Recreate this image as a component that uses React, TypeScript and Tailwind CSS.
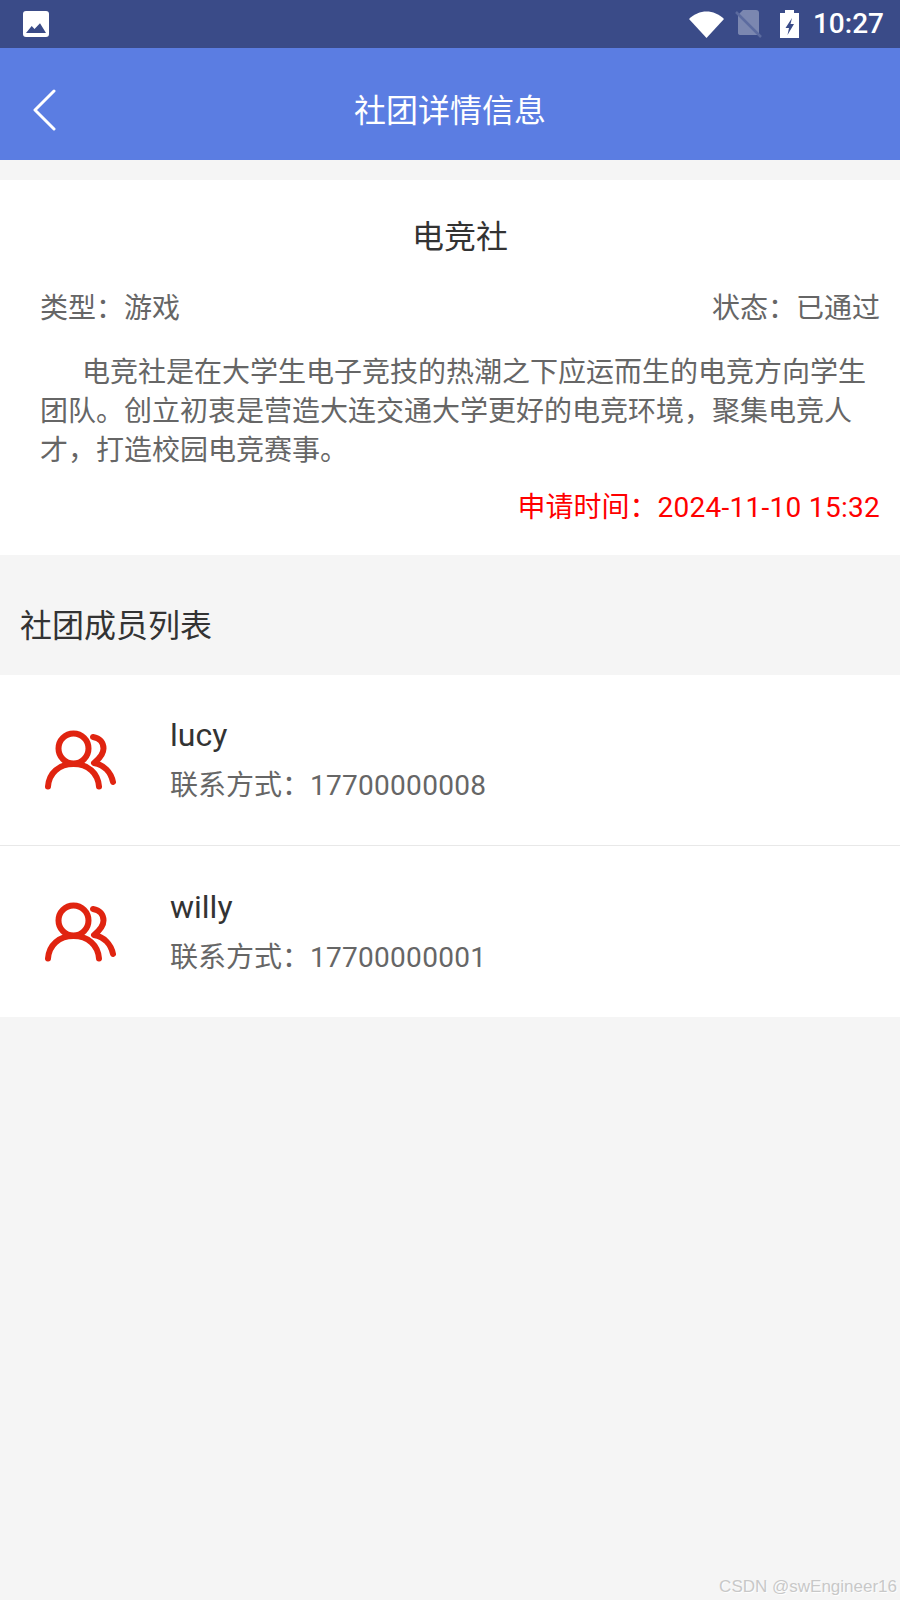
import React from 'react';

const members = [
  { name: 'lucy', phone: '17700000008' },
  { name: 'willy', phone: '17700000001' },
];

const GroupIcon: React.FC = () => (
  <svg width="72" height="62" viewBox="0 0 72 62" fill="none" stroke="#e02410" strokeWidth="6" strokeLinecap="round" strokeLinejoin="round">
    <circle cx="29.500" cy="19.500" r="15" />
    <path d="M4 57.500 C5 44 15 35 29.500 35 C44 35 54 44 55 57.500" />
    <path d="M49 8 C56 9 59.500 14 59.500 19.500 C59.500 25 55 30 50 34 C60 36 67 43 69 53" />
  </svg>
);

const StatusBar: React.FC = () => (
  <div className="h-12 bg-[#3a4b88] flex items-center justify-between pl-[23px] pr-4 text-white">
    <svg width="26" height="26" viewBox="0 0 26 26">
      <rect width="26" height="26" rx="3" fill="#fff" />
      <path d="M3 22 L8.700 15 L11.500 18 L17 12.300 L23 22 Z" fill="#3a4b88" />
    </svg>
    <div className="flex items-center">
      <svg width="35" height="27" viewBox="0 0 35 27" className="mr-[11px]">
        <path d="M0 8 C10 -2 25 -2 35 8 L17.500 27 Z" fill="#fff" />
      </svg>
      <svg width="27" height="28" viewBox="0 0 27 28" className="mr-[18px]">
        <path d="M8 0 H21 Q24 0 24 3 V23 Q24 25 21 25 H6 Q3 25 3 23 V5 Z" fill="#7b87b0" />
        <path d="M1 2 L26 27" stroke="#5c6b9f" strokeWidth="2.500" />
      </svg>
      <svg width="19" height="28" viewBox="0 0 19 28" className="mr-[14px]">
        <path d="M5 0 H14 V3 H19 V28 H0 V3 H5 Z" fill="#fff" />
        <path d="M12 8 L5.500 18 H9 L7.500 25 L14 14 H10.500 Z" fill="#3a4b88" />
      </svg>
      <span className="text-[28px] leading-none font-medium">10:27</span>
    </div>
  </div>
);

export default function App() {
  return (
    <div
      className="relative w-[900px] h-[1600px] bg-[#f5f5f5] flex flex-col overflow-hidden"
      style={{ fontFamily: 'Roboto, "Noto Sans CJK SC", sans-serif' }}
    >
      <StatusBar />
      <div className="h-28 bg-[#5b7de2] relative flex items-center justify-center pt-[14px]">
        <svg width="24" height="42" viewBox="0 0 24 42" fill="none" stroke="#fff" strokeWidth="3" strokeLinecap="round" strokeLinejoin="round" className="absolute left-[33px] top-[41px]">
          <path d="M21 2 L2 21 L21 40" />
        </svg>
        <span className="text-[32px] text-white">社团详情信息</span>
      </div>

      <div className="mt-5 h-[375px] bg-white pl-10 pr-5 pt-[33px] text-[#666] text-[28px]">
        <div className="text-center text-[32px] leading-[48px] text-[#333]">电竞社</div>
        <div className="mt-[28px] flex justify-between leading-[40px]">
          <span>类型：游戏</span>
          <span>状态：已通过</span>
        </div>
        <p className="mt-[24px] pr-1 indent-[42px] leading-[39px]">
          电竞社是在大学生电子竞技的热潮之下应运而生的电竞方向学生团队。创立初衷是营造大连交通大学更好的电竞环境，聚集电竞人才，打造校园电竞赛事。
        </p>
        <div className="mt-[18px] text-right text-[#ff0000] leading-[40px]">
          申请时间：<span className="tracking-[0.28px]">2024-11-10 15:32</span>
        </div>
      </div>

      <div className="h-[120px] flex items-center pl-5 pt-[22px] text-[32px] text-[#333]">社团成员列表</div>

      <div className="bg-white">
        {members.map((m, i) => (
          <div key={m.name} className={`h-[171px] flex items-center ${i === 0 ? 'border-b border-[#e8e8e8]' : ''}`}>
            <div className="w-[170px] pl-[44px] shrink-0">
              <GroupIcon />
            </div>
            <div className={i === 0 ? '' : 'pt-[2px]'}>
              <div className="text-[32px] leading-[48px] text-[#333]">{m.name}</div>
              <div className="mt-[3px] text-[28px] leading-[48px] text-[#666]">
                联系方式：<span className="tracking-[0.28px]">{m.phone}</span>
              </div>
            </div>
          </div>
        ))}
      </div>

      <span
        className="absolute right-[3px] bottom-[5px] text-[17px] leading-none text-[#c8c8c8] [text-shadow:1px_1px_1px_#fff]"
        style={{ fontFamily: '"Liberation Sans", sans-serif' }}
      >
        CSDN @swEngineer16
      </span>
    </div>
  );
}
